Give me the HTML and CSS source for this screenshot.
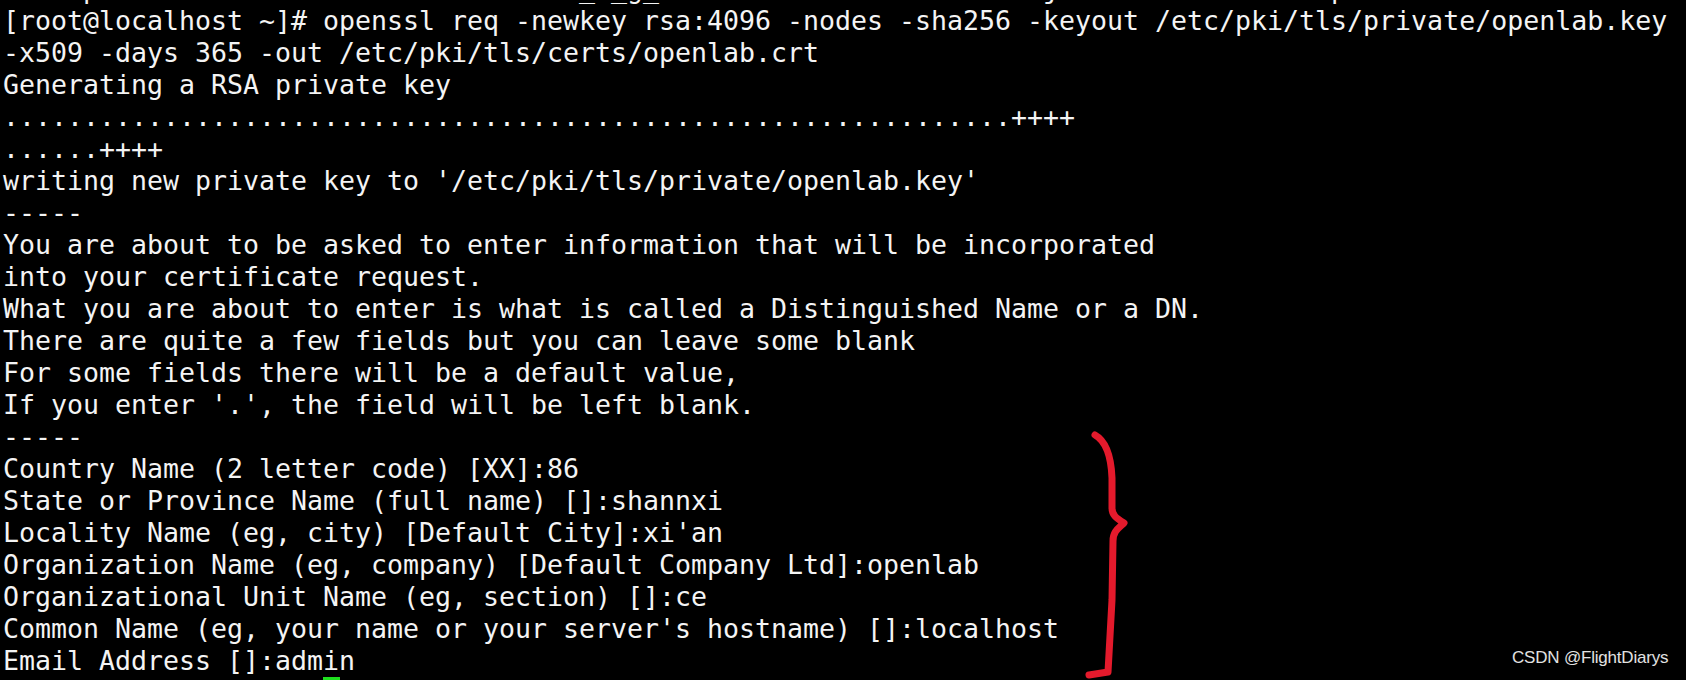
FILE: index.html
```html
<!DOCTYPE html>
<html>
<head>
<meta charset="utf-8">
<title>openssl req</title>
<link rel="stylesheet" href="styles.css">
</head>
<body>
<div class="screen">
  <div class="term">
    <div class="line">     p                              _ _g_                        j                 p</div>
    <div class="line">[root@localhost ~]# openssl req -newkey rsa:4096 -nodes -sha256 -keyout /etc/pki/tls/private/openlab.key</div>
    <div class="line">-x509 -days 365 -out /etc/pki/tls/certs/openlab.crt</div>
    <div class="line">Generating a RSA private key</div>
    <div class="line">...............................................................++++</div>
    <div class="line">......++++</div>
    <div class="line">writing new private key to '/etc/pki/tls/private/openlab.key'</div>
    <div class="line">-----</div>
    <div class="line">You are about to be asked to enter information that will be incorporated</div>
    <div class="line">into your certificate request.</div>
    <div class="line">What you are about to enter is what is called a Distinguished Name or a DN.</div>
    <div class="line">There are quite a few fields but you can leave some blank</div>
    <div class="line">For some fields there will be a default value,</div>
    <div class="line">If you enter '.', the field will be left blank.</div>
    <div class="line">-----</div>
    <div class="line">Country Name (2 letter code) [XX]:86</div>
    <div class="line">State or Province Name (full name) []:shannxi</div>
    <div class="line">Locality Name (eg, city) [Default City]:xi'an</div>
    <div class="line">Organization Name (eg, company) [Default Company Ltd]:openlab</div>
    <div class="line">Organizational Unit Name (eg, section) []:ce</div>
    <div class="line">Common Name (eg, your name or your server's hostname) []:localhost</div>
    <div class="line">Email Address []:admin</div>
    <div class="line">                    <span class="cursor"> </span></div>
  </div>
  <svg class="brace" width="1686" height="680" viewBox="0 0 1686 680" xmlns="http://www.w3.org/2000/svg">
    <path d="M1095 435 C1104 440 1111 452 1112 478 L1112 508 C1112 515 1116 518 1124 523 C1119 528 1113 531 1113 541 L1112 600 L1108 672 L1089 675" fill="none" stroke="#e41a2c" stroke-width="7" stroke-linecap="round" stroke-linejoin="round"/>
  </svg>
  <div class="watermark">CSDN @FlightDiarys</div>
</div>
</body>
</html>
```

FILE: styles.css
```css
html, body {
  margin: 0;
  padding: 0;
  background: #000;
}

.screen {
  position: relative;
  width: 1686px;
  height: 680px;
  overflow: hidden;
  background: #000;
}

.term {
  margin-top: -27.2px;
  padding-left: 3px;
  font-family: "DejaVu Sans Mono", monospace;
  font-size: 26.58px;
  line-height: 32px;
  color: #f4f4f4;
}

.line {
  height: 32px;
  white-space: pre;
}

.cursor {
  display: inline-block;
  width: 17px;
  height: 32px;
  vertical-align: top;
  background: #1ee01e;
}

.brace {
  position: absolute;
  left: 0;
  top: 0;
  pointer-events: none;
}

.watermark {
  position: absolute;
  left: 1512px;
  top: 647px;
  font-family: "Liberation Sans", Arial, sans-serif;
  font-size: 17px;
  line-height: 22px;
  color: #e2e2e2;
  letter-spacing: -0.2px;
}
```
